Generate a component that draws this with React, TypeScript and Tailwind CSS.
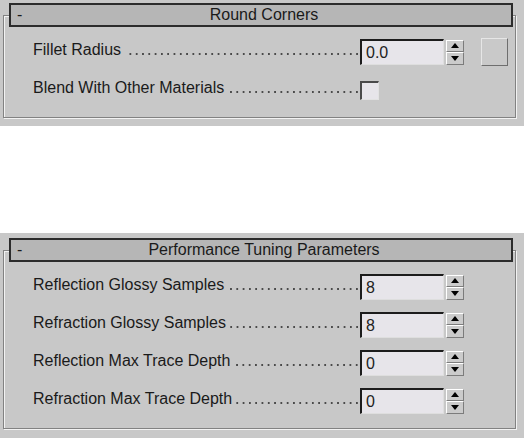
import React from 'react';

type Row = {
  label: string;
  value?: string;
  checkbox?: boolean;
  swatch?: boolean;
};

const Header = ({ title }: { title: string }) => (
  <div className="relative z-10 ml-[9px] mr-[11px] grid h-[24px] grid-cols-[30px_1fr_24px] items-center border-2 border-[#2c2c2c] bg-[#b6b6b6]">
    <span className="pl-[6px] leading-none">-</span>
    <span className="text-center leading-none">{title}</span>
    <span />
  </div>
);

const Spinner = () => (
  <div className="ml-[2px] flex h-[25px] w-[18px] flex-col">
    <div className="flex flex-1 items-center justify-center border border-t-white border-l-white border-b-[#7c7c7c] border-r-[#7c7c7c] bg-[#cbcbcb]">
      <svg width="8" height="5" viewBox="0 0 8 5">
        <path d="M4 0L8 5H0Z" fill="#000" />
      </svg>
    </div>
    <div className="flex flex-1 items-center justify-center border border-t-white border-l-white border-b-[#7c7c7c] border-r-[#7c7c7c] bg-[#cbcbcb]">
      <svg width="8" height="5" viewBox="0 0 8 5">
        <path d="M0 0H8L4 5Z" fill="#000" />
      </svg>
    </div>
  </div>
);

const NumberField = ({ value }: { value: string }) => (
  <div className="flex h-[26px] w-[84px] items-center border-t-2 border-l-2 border-b border-r border-t-[#1c1c1c] border-l-[#1c1c1c] border-b-[#dedede] border-r-[#dedede] bg-[#e7e5ea] pl-[4px]">
    <span className="leading-none text-[#222]">{value}</span>
  </div>
);

const Checkbox = () => (
  <div className="h-[19px] w-[19px] border-t-2 border-l-2 border-b border-r border-t-[#4a4a4a] border-l-[#4a4a4a] border-b-[#e2e2e2] border-r-[#e2e2e2] bg-[#e7e5ea]" />
);

const Swatch = () => (
  <div className="ml-[17px] h-[28px] w-[27px] border border-t-[#e6e6e6] border-l-[#e6e6e6] border-b-[#6e6e6e] border-r-[#6e6e6e] bg-[#c9c9c9]" />
);

const ParamRow = ({ row }: { row: Row }) => (
  <div className="flex h-[28px] items-center pl-[29px]">
    <div className="-mt-[4px] flex w-[327px] items-baseline">
      <span className="whitespace-nowrap">{row.label}</span>
      <span className="mb-[1px] ml-[4px] mr-[2px] h-[2px] flex-1 bg-repeat-x [background-image:linear-gradient(90deg,transparent_4.3px,#4a4a4a_4.3px)] [background-position:right_0_bottom_0] [background-size:6.3px_2px]" />
    </div>
    {row.checkbox ? (
      <Checkbox />
    ) : (
      <>
        <NumberField value={row.value ?? ''} />
        <Spinner />
        {row.swatch && <Swatch />}
      </>
    )}
  </div>
);

const Rollout = ({ title, rows, className }: { title: string; rows: Row[]; className: string }) => (
  <div className={`bg-[#c8c8c8] ${className}`}>
    <Header title={title} />
    <div className="-mt-[12px] ml-[3px] mr-[8px] flex flex-col gap-[10px] border border-[#828282] pt-[22px] pb-[13px] shadow-[1px_1px_0_#f2f2f2,inset_1px_1px_0_#f2f2f2]">
      {rows.map((row) => (
        <ParamRow key={row.label} row={row} />
      ))}
    </div>
  </div>
);

const roundCorners: Row[] = [
  { label: 'Fillet Radius', value: '0.0', swatch: true },
  { label: 'Blend With Other Materials', checkbox: true },
];

const performance: Row[] = [
  { label: 'Reflection Glossy Samples', value: '8' },
  { label: 'Refraction Glossy Samples', value: '8' },
  { label: 'Reflection Max Trace Depth', value: '0' },
  { label: 'Refraction Max Trace Depth', value: '0' },
];

export default function App() {
  return (
    <div className="flex h-[438px] w-[524px] flex-col justify-between overflow-hidden bg-white font-['Liberation_Sans',Arial,sans-serif] text-[16px] text-[#1a1a1a]">
      <Rollout title="Round Corners" rows={roundCorners} className="h-[126px] pt-[3px]" />
      <Rollout title="Performance Tuning Parameters" rows={performance} className="h-[205px] pt-[5px]" />
    </div>
  );
}
